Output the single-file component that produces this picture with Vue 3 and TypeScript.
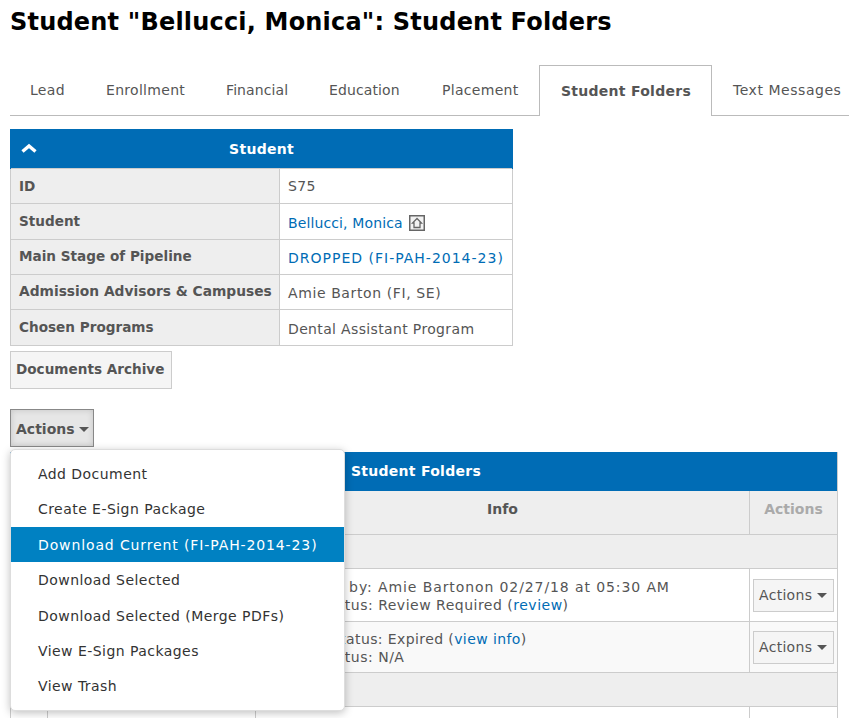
<script setup lang="ts">
const tabs = ['Lead', 'Enrollment', 'Financial', 'Education', 'Placement', 'Student Folders', 'Text Messages']
const menu = ['Add Document', 'Create E-Sign Package', 'Download Current (FI-PAH-2014-23)', 'Download Selected', 'Download Selected (Merge PDFs)', 'View E-Sign Packages', 'View Trash']
</script>

<template>
  <div class="page">
    <h1>Student "Bellucci, Monica": Student Folders</h1>
    <ul class="tabs">
      <li v-for="t in tabs" :key="t" :class="{ active: t === 'Student Folders' }">{{ t }}</li>
    </ul>
    <table class="student">
      <colgroup><col class="col-a" /><col class="col-b" /></colgroup>
      <thead>
        <tr>
          <th colspan="2" class="blue">
            <svg class="chev" width="16" height="10" viewBox="0 0 16 10"><path d="M1.500 8.500 8 3l6.500 5.500" fill="none" stroke="#fff" stroke-width="3.400"/></svg>
            Student
          </th>
        </tr>
      </thead>
      <tbody>
        <tr><th>ID</th><td>S75</td></tr>
        <tr>
          <th>Student</th>
          <td>
            <a class="name">Bellucci, Monica</a>
            <svg class="home" width="16" height="16" viewBox="0 0 16 16"><rect x=".75" y=".75" width="14.500" height="14.500" fill="#f2f2f2" stroke="#666" stroke-width="1.500"/><path d="M8 3.500 3.500 8h1.500v4.500h6V8h1.500z" fill="none" stroke="#666" stroke-width="1.300"/></svg>
          </td>
        </tr>
        <tr><th>Main Stage of Pipeline</th><td><a class="wide">DROPPED (FI-PAH-2014-23)</a></td></tr>
        <tr><th class="tight">Admission Advisors &amp; Campuses</th><td class="amie">Amie Barton (FI, SE)</td></tr>
        <tr><th>Chosen Programs</th><td>Dental Assistant Program</td></tr>
      </tbody>
    </table>
    <button class="btn archive">Documents Archive</button>
    <div class="actions-wrap">
      <button class="btn open">Actions <span class="caret"></span></button>
      <ul class="menu">
        <li v-for="m in menu" :key="m" :class="{ hover: m.includes('Current') }">{{ m }}</li>
      </ul>
    </div>
    <div class="folders">
      <div class="blue fhead"><span>Student Folders</span></div>
      <div class="row hdr">
        <div class="c1"></div><div class="c2"></div>
        <div class="c3 info">Info</div>
        <div class="c4 muted">Actions</div>
      </div>
      <div class="row group g1"></div>
      <div class="row r1">
        <div class="c1"></div><div class="c2"></div>
        <div class="c3 txt">
          <div class="far">Uploaded by: Amie Bartonon 02/27/18 at 05:30 AM</div>
          <div class="near">E-Sign Status: Review Required (<a>review</a>)</div>
        </div>
        <div class="c4"><button class="btn small">Actions <span class="caret"></span></button></div>
      </div>
      <div class="row r2">
        <div class="c1"></div><div class="c2"></div>
        <div class="c3 txt">
          <div class="near2">Signing Status: Expired (<a>view info</a>)</div>
          <div class="near">E-Sign Status: N/A</div>
        </div>
        <div class="c4"><button class="btn small">Actions <span class="caret"></span></button></div>
      </div>
      <div class="row group g2"></div>
      <div class="row r3">
        <div class="c1"></div><div class="c2"></div>
        <div class="c3 txt"><div class="far">Uploaded by: Amie Bartonon 02/27/18 at 05:30 AM</div></div>
        <div class="c4"></div>
      </div>
    </div>
  </div>
</template>

<style scoped>
.page { width: 849px; height: 718px; overflow: hidden; padding: 0 0 0 10px; box-sizing: border-box; font: 14px/20px "DejaVu Sans", Verdana, sans-serif; color: #555; position: relative; }
h1 { margin: 0; padding-top: 6px; height: 65px; box-sizing: border-box; font: bold 24px/32px "DejaVu Sans", Verdana, sans-serif; letter-spacing: .19px; color: #000; white-space: nowrap; }
.tabs { list-style: none; margin: 0; padding: 0; display: flex; height: 51px; width: 839px; border-bottom: 1px solid #bbb; box-sizing: border-box; white-space: nowrap; }
.tabs li { height: 50px; padding-top: 15px; box-sizing: border-box; flex: none; letter-spacing: .3px; }
.tabs li:nth-child(1) { width: 76px; padding-left: 20px; }
.tabs li:nth-child(2) { width: 120px; padding-left: 20px; }
.tabs li:nth-child(3) { width: 103px; padding-left: 20px; letter-spacing: .1px; }
.tabs li:nth-child(4) { width: 113px; padding-left: 20px; letter-spacing: .1px; }
.tabs li:nth-child(5) { width: 117px; padding-left: 20px; }
.tabs li:nth-child(7) { padding-left: 21px; letter-spacing: .54px; }
.tabs li.active { font-weight: bold; border: 1px solid #bbb; border-bottom: 0; height: 51px; width: 173px; background: #fff; padding-left: 21px; letter-spacing: .27px; }
table { border-collapse: collapse; }
.student { margin-top: 13px; width: 503px; table-layout: fixed; }
.col-a { width: 269px; }
.blue { background: #006cb5; color: #fff; font-weight: bold; letter-spacing: .27px; }
.student thead th { height: 39px; padding: 0; text-align: center; position: relative; border: 0; border-left: 1px solid #006cb5; border-right: 1px solid #006cb5; }
.chev { position: absolute; left: 10px; top: 14px; }
.student tbody th, .student tbody td { border: 1px solid #ccc; height: 35px; padding: 0 8px; text-align: left; box-sizing: border-box; white-space: nowrap; }
.student tbody tr:nth-child(2) th, .student tbody tr:nth-child(5) th { height: 36px; }
.student tbody th { background: #eee; font-weight: bold; font-size: 13.600px; padding-bottom: 2px; }
.student tbody td { letter-spacing: .35px; }
.student tbody tr:nth-child(1) th, .student tbody tr:nth-child(1) td { padding-bottom: 1px; }
.student tbody tr:nth-child(n+2) td { padding-top: 2px; }
.student tbody th.tight { font-size: 13.800px; }
.student tbody td a.wide { letter-spacing: 1px; }
.student tbody td a.name { letter-spacing: .12px; }
.student tbody td.amie { letter-spacing: .6px; }
a { color: #006cb5; }
.home { vertical-align: -3px; margin-left: 6px; }
.btn { font: inherit; color: #555; background: #f5f5f5; border: 1px solid #ccc; padding: 0 5px; display: block; white-space: nowrap; }
.archive { font-weight: bold; font-size: 13.600px; height: 38px; margin-top: 5px; width: 162px; text-align: left; padding-bottom: 2px; }
.actions-wrap { position: relative; margin-top: 20px; }
.open { font-weight: bold; height: 38px; width: 84px; text-align: left; background: #e6e6e6; border-color: #888; box-shadow: inset 0 0 6px rgba(0,0,0,.15); padding-top: 1px; }
.caret { display: inline-block; width: 0; height: 0; border: 5px solid transparent; border-top-color: #555; border-bottom: 0; vertical-align: 2px; margin-left: 0; }
.menu { position: absolute; z-index: 5; top: 40px; left: 0; margin: 0; padding: 7px 0; list-style: none; width: 335px; height: 262px; box-sizing: border-box; background: #fff; border: 1px solid #ddd; border-radius: 5px; box-shadow: 0 2px 8px rgba(0,0,0,.25); color: #333; letter-spacing: .45px; }
.menu li { height: 35.140px; line-height: 35px; padding-left: 27px; white-space: nowrap; }
.menu li:nth-child(n+3) { line-height: 37px; }
.menu li.hover { background: #0081c2; color: #fff; letter-spacing: .88px; }
.folders { margin-top: 5px; width: 828px; border-right: 1px solid #ccc; box-sizing: border-box; }
.fhead { height: 39px; padding-left: 341px; line-height: 39px; }
.row { display: flex; border-left: 1px solid #ccc; border-bottom: 1px solid #ccc; box-sizing: border-box; }
.c1 { width: 36px; border-right: 1px solid #ccc; }
.c2 { width: 207px; border-right: 1px solid #ccc; }
.c3 { width: 494px; border-right: 1px solid #ccc; box-sizing: border-box; }
.c4 { flex: 1; display: flex; align-items: center; justify-content: center; }
.hdr { height: 44px; background: #eee; font-weight: bold; }
.hdr .c3, .hdr .c4 { padding-bottom: 8px; }
.info { display: flex; align-items: center; justify-content: center; }
.muted { color: #aaa; }
.group { height: 34px; background: #eee; }
.g2 { height: 34px; }
.r1 { height: 53px; }
.r2 { height: 51px; background: #f9f9f9; }
.r3 { height: 40px; }
.txt { padding: 9px 8px; line-height: 18px; white-space: nowrap; overflow: hidden; }
.r2 .txt { padding-top: 8px; }
.r3 .txt { padding-top: 11px; }
.far { letter-spacing: .9px; padding-left: 6px; }
.near { letter-spacing: .5px; padding-left: 4px; }
.near2 { letter-spacing: .4px; padding-left: 7px; }
.small { height: 33px; width: 81px; padding: 0 5px; letter-spacing: .3px; text-align: left; }
</style>
